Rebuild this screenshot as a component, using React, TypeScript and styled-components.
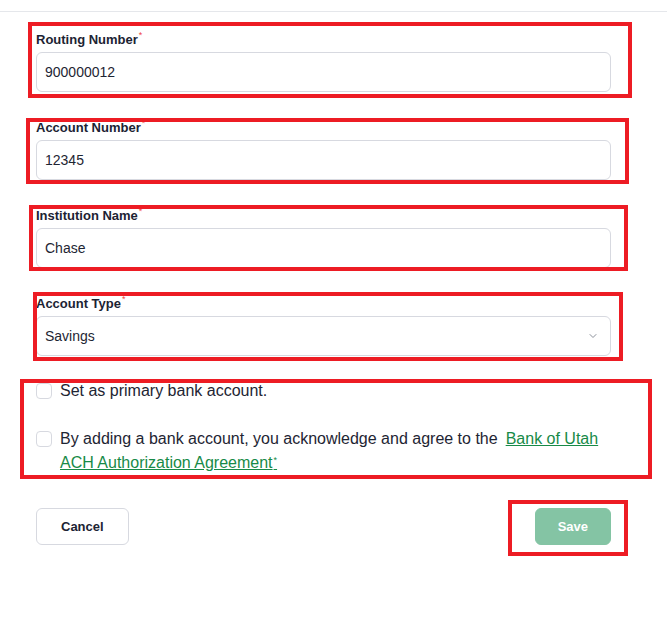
import styled, { createGlobalStyle } from 'styled-components';

const GlobalStyle = createGlobalStyle`
    body {
        margin: 0;
        background: #ffffff;
        font-family: "Liberation Sans", Arial, sans-serif;
        color: #1e2533;
    }
`;

const Page = styled.div`
    position: relative;
    width: 667px;
    min-height: 620px;
`;

const TopBar = styled.div`
    height: 11px;
    border-bottom: 1px solid #e5e7eb;
`;

const Form = styled.form`
    display: flex;
    flex-direction: column;
    padding: 19px 56px 0 36px;
`;

const Field = styled.div`
    display: flex;
    flex-direction: column;
    gap: 3px;
    margin-bottom: 27px;
`;

const Label = styled.label`
    display: block;
    height: 18px;
    font-size: 13px;
    font-weight: 700;
    line-height: 18px;
    color: #1c2333;
`;

const Star = styled.span<{ $link?: boolean }>`
    position: relative;
    top: -${p => (p.$link ? 5 : 6)}px;
    margin-left: 1px;
    color: ${p => (p.$link ? 'inherit' : '#ef4444')};
    font-size: 9px;
    font-weight: 400;
    line-height: 0;
`;

const Input = styled.input`
    box-sizing: border-box;
    height: 40px;
    width: 100%;
    padding: 0 8px;
    border: 1px solid #d7d9e0;
    border-radius: 6px;
    font-family: inherit;
    font-size: 14px;
    color: #1e2533;
    outline: none;
`;

const SelectBox = styled.div`
    box-sizing: border-box;
    height: 40px;
    display: flex;
    align-items: center;
    justify-content: space-between;
    padding: 0 11px 0 8px;
    border: 1px solid #d7d9e0;
    border-radius: 6px;
    font-size: 14px;
    color: #1e2533;
`;

const Checks = styled.div`
    display: flex;
    flex-direction: column;
    gap: 24px;
    margin-top: -4px;
`;

const CheckRow = styled.div`
    display: flex;
    align-items: flex-start;
    gap: 8px;
`;

const Box = styled.span`
    flex: none;
    box-sizing: border-box;
    width: 16px;
    height: 16px;
    margin-top: 4px;
    border: 1px solid #d7d9e0;
    border-radius: 4px;
`;

const CheckText = styled.span`
    font-size: 16px;
    line-height: 24px;
    color: #1e2533;
`;

const AgreeLink = styled.a`
    color: #178a47;
    text-decoration: underline;
    margin-left: 8px;
`;

const Actions = styled.div`
    display: flex;
    justify-content: space-between;
    margin-top: 33px;
`;

const Button = styled.button<{ $primary?: boolean }>`
    box-sizing: border-box;
    height: 37px;
    padding: 0 ${p => (p.$primary ? '22px' : '24px')};
    border-radius: 6px;
    font-family: inherit;
    font-size: 13px;
    font-weight: 700;
    border: 1px solid ${p => (p.$primary ? '#84c4a4' : '#d7d9e0')};
    background: ${p => (p.$primary ? '#84c4a4' : '#ffffff')};
    color: ${p => (p.$primary ? '#ffffff' : '#1c2333')};
`;

// annotation frames drawn over the screenshot
const Mark = styled.div<{ $x: number; $y: number; $w: number; $h: number }>`
    position: absolute;
    left: ${p => p.$x}px;
    top: ${p => p.$y}px;
    width: ${p => p.$w}px;
    height: ${p => p.$h}px;
    box-sizing: border-box;
    border: 4px solid #ed1c24;
    pointer-events: none;
`;

const Chevron = () => (
    <svg width="12" height="12" viewBox="0 0 24 24" fill="none" stroke="#8b909a" strokeWidth="2" strokeLinecap="round" strokeLinejoin="round">
        <path d="m6 9 6 6 6-6" />
    </svg>
);

const fields = [
    { label: 'Routing Number', value: '900000012' },
    { label: 'Account Number', value: '12345' },
    { label: 'Institution Name', value: 'Chase' },
];

const marks = [
    { x: 28, y: 22, w: 604, h: 76 },
    { x: 26, y: 118, w: 603, h: 66 },
    { x: 29, y: 205, w: 599, h: 66 },
    { x: 33, y: 292, w: 590, h: 69 },
    { x: 20, y: 379, w: 632, h: 100 },
    { x: 508, y: 500, w: 120, h: 56 },
];

export default function App() {
    return (
        <Page>
            <GlobalStyle />
            <TopBar />
            <Form onSubmit={e => e.preventDefault()}>
                {fields.map(f => (
                    <Field key={f.label}>
                        <Label>{f.label}<Star>*</Star></Label>
                        <Input defaultValue={f.value} />
                    </Field>
                ))}
                <Field>
                    <Label>Account Type<Star>*</Star></Label>
                    <SelectBox>
                        <span>Savings</span>
                        <Chevron />
                    </SelectBox>
                </Field>
                <Checks>
                    <CheckRow>
                        <Box />
                        <CheckText>Set as primary bank account.</CheckText>
                    </CheckRow>
                    <CheckRow>
                        <Box />
                        <CheckText>
                            By adding a bank account, you acknowledge and agree to the
                            <AgreeLink href="#">Bank of Utah ACH Authorization Agreement<Star $link>*</Star></AgreeLink>
                        </CheckText>
                    </CheckRow>
                </Checks>
                <Actions>
                    <Button type="button">Cancel</Button>
                    <Button type="submit" $primary>Save</Button>
                </Actions>
            </Form>
            {marks.map((m, i) => (
                <Mark key={i} $x={m.x} $y={m.y} $w={m.w} $h={m.h} />
            ))}
        </Page>
    );
}
